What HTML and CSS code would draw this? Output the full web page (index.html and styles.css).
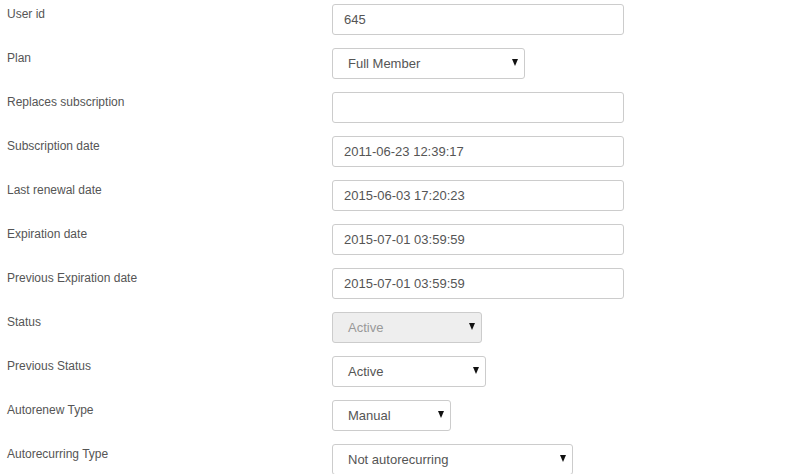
FILE: index.html
```html
<!DOCTYPE html>
<html lang="en">
<head>
	<meta charset="UTF-8">
	<title>Subscription</title>
	<link rel="stylesheet" href="styles.css">
</head>
<body>
	<section class="form">
		<div class="row">
			<label>User id</label>
			<div class="input">645</div>
		</div>
		<div class="row">
			<label>Plan</label>
			<div class="select w193"><span>Full Member</span><svg width="6" height="7" viewBox="0 0 6 7"><polygon points="0,0 6,0 3,7"/></svg></div>
		</div>
		<div class="row">
			<label>Replaces subscription</label>
			<div class="input"></div>
		</div>
		<div class="row">
			<label>Subscription date</label>
			<div class="input">2011-06-23 12:39:17</div>
		</div>
		<div class="row">
			<label>Last renewal date</label>
			<div class="input">2015-06-03 17:20:23</div>
		</div>
		<div class="row">
			<label>Expiration date</label>
			<div class="input">2015-07-01 03:59:59</div>
		</div>
		<div class="row">
			<label>Previous Expiration date</label>
			<div class="input">2015-07-01 03:59:59</div>
		</div>
		<div class="row">
			<label>Status</label>
			<div class="select w150 disabled"><span>Active</span><svg width="6" height="7" viewBox="0 0 6 7"><polygon points="0,0 6,0 3,7"/></svg></div>
		</div>
		<div class="row">
			<label>Previous Status</label>
			<div class="select w154"><span>Active</span><svg width="6" height="7" viewBox="0 0 6 7"><polygon points="0,0 6,0 3,7"/></svg></div>
		</div>
		<div class="row">
			<label>Autorenew Type</label>
			<div class="select w119"><span>Manual</span><svg width="6" height="7" viewBox="0 0 6 7"><polygon points="0,0 6,0 3,7"/></svg></div>
		</div>
		<div class="row">
			<label>Autorecurring Type</label>
			<div class="select w241"><span>Not autorecurring</span><svg width="6" height="7" viewBox="0 0 6 7"><polygon points="0,0 6,0 3,7"/></svg></div>
		</div>
	</section>
</body>
</html>
```

FILE: styles.css
```css
*{margin:0;padding:0;box-sizing:border-box}
body{
	background:#fff;
	font-family:"Liberation Sans",Arial,sans-serif;
	color:#555;
	overflow:hidden;
}
.form{
	padding-top:4px;
}
.row{
	display:grid;
	grid-template-columns:332px auto;
	height:44px;
	align-items:start;
}
.row label{
	padding:2px 0 0 7px;
	font-size:12px;
	line-height:17px;
	color:#555;
}
.input,.select{
	height:31px;
	border:1px solid #ccc;
	border-radius:3px;
	font-size:13px;
	line-height:29px;
	color:#555;
	background:#fff;
}
.input{
	width:292px;
	padding-left:11px;
}
.select{
	display:flex;
	justify-content:space-between;
	align-items:center;
	padding:0 6px 0 15px;
}
.select svg{
	fill:#111;
	margin-top:-2px;
}
.select.disabled{
	background:#eee;
	color:#999;
}
.w193{width:193px}
.w150{width:150px}
.w154{width:154px}
.w119{width:119px}
.w241{width:241px}
```
